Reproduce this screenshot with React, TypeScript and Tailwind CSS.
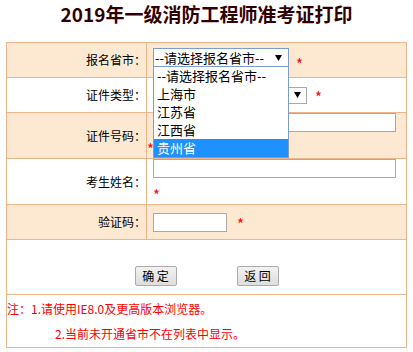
import React from 'react';

const cjk = "font-['Microsoft_YaHei','Noto_Sans_CJK_SC',sans-serif]";

const Star: React.FC<{ className?: string }> = ({ className = '' }) => (
  <span className={`text-[15px] leading-none text-[#ff0000] ${className}`}>*</span>
);

const Arrow: React.FC = () => (
  <svg width="7" height="6" viewBox="0 0 7 6" className="shrink-0">
    <path d="M0 0 H7 L3.5 6 Z" fill="#000" />
  </svg>
);

const provinces = ['--请选择报名省市--', '上海市', '江苏省', '江西省', '贵州省'];

const App: React.FC = () => {
  return (
    <div className={`w-[413px] h-[352px] bg-white overflow-hidden ${cjk}`}>
      <div className="h-[28px] flex items-center justify-center text-[19px] font-bold text-[#330000]">
        2019年一级消防工程师准考证打印
      </div>
      <div className="h-[14px]" />

      <div className="ml-[6px] w-[401px] border border-[#efb48b] text-[12px] text-black">
        {/* 报名省市 */}
        <div className="flex h-[35px] border-b border-[#efb48b] bg-[#fde9d2]">
          <div className="w-[140px] border-r border-[#efb48b] flex items-center justify-end">
            报名省市：
          </div>
          <div className="flex-1 pl-[6px] pt-[5px] flex items-start">
            <div className="relative z-10">
              <div className="w-[136px] h-[19px] border border-[#7a9ccf] bg-white flex items-center justify-between pl-[1px] pr-[6px] text-[13px] leading-none">
                <span>--请选择报名省市--</span>
                <Arrow />
              </div>
              <div className="absolute left-0 top-[19px] w-[136px] border border-t-0 border-[#7a9ccf] bg-white text-[13px]">
                {provinces.map((p, i) => (
                  <div
                    key={p}
                    className={`h-[18px] leading-[18px] pl-[3px] ${
                      i === provinces.length - 1 ? 'bg-[#1e90ff] text-white' : 'text-black'
                    }`}
                  >
                    {p}
                  </div>
                ))}
              </div>
            </div>
            <Star className="ml-[7px] mt-[8px]" />
          </div>
        </div>

        {/* 证件类型 */}
        <div className="flex h-[35px] border-b border-[#efb48b] bg-white">
          <div className="w-[140px] border-r border-[#efb48b] flex items-center justify-end">
            证件类型：
          </div>
          <div className="flex-1 pl-[6px] flex items-center">
            <div className="w-[154px] h-[17px] border border-[#a9a9a9] bg-white flex items-center justify-end pr-[5px]">
              <Arrow />
            </div>
            <Star className="ml-[8px] mt-[3px]" />
          </div>
        </div>

        {/* 证件号码 */}
        <div className="flex h-[46px] border-b border-[#efb48b] bg-[#fde9d2]">
          <div className="w-[140px] border-r border-[#efb48b] flex items-center justify-end">
            证件号码：
          </div>
          <div className="flex-1 pl-[6px] flex flex-col items-start">
            <div className="w-[243px] h-[19px] border border-[#a9a9a9] bg-white" />
            <Star className="-ml-[6px] mt-[9px]" />
          </div>
        </div>

        {/* 考生姓名 */}
        <div className="flex h-[46px] border-b border-[#efb48b] bg-white">
          <div className="w-[140px] border-r border-[#efb48b] flex items-center justify-end">
            考生姓名：
          </div>
          <div className="flex-1 pl-[6px] flex flex-col items-start">
            <div className="w-[243px] h-[19px] border border-[#a9a9a9] bg-white" />
            <Star className="mt-[9px]" />
          </div>
        </div>

        {/* 验证码 */}
        <div className="flex h-[35px] border-b border-[#efb48b] bg-[#fde9d2]">
          <div className="w-[140px] border-r border-[#efb48b] flex items-center justify-end">
            验证码：
          </div>
          <div className="flex-1 pl-[6px] flex items-center">
            <div className="w-[74px] h-[19px] border border-[#a9a9a9] bg-white" />
            <Star className="ml-[10px] mt-[3px]" />
          </div>
        </div>

        {/* buttons */}
        <div className="h-[55px] border-b border-[#efb48b] bg-white flex justify-center items-start pt-[26px] gap-[60px]">
          <button className="w-[42px] h-[20px] border border-[#acacac] rounded-[2px] bg-gradient-to-b from-[#f2f2f2] to-[#dddddd] text-[12px] leading-none text-black">
            确&nbsp;定
          </button>
          <button className="w-[42px] h-[20px] border border-[#acacac] rounded-[2px] bg-gradient-to-b from-[#f2f2f2] to-[#dddddd] text-[12px] leading-none text-black">
            返&nbsp;回
          </button>
        </div>

        {/* notes */}
        <div className="h-[52px] text-[12px] text-[#ff0000] font-['SimSun','Noto_Sans_CJK_SC',sans-serif]">
          <div className="h-[26px] leading-[26px] pt-[1px]">注：1.请使用IE8.0及更高版本浏览器。</div>
          <div className="h-[26px] leading-[26px] pl-[48px]">2.当前未开通省市不在列表中显示。</div>
        </div>
      </div>
    </div>
  );
};

export default App;
